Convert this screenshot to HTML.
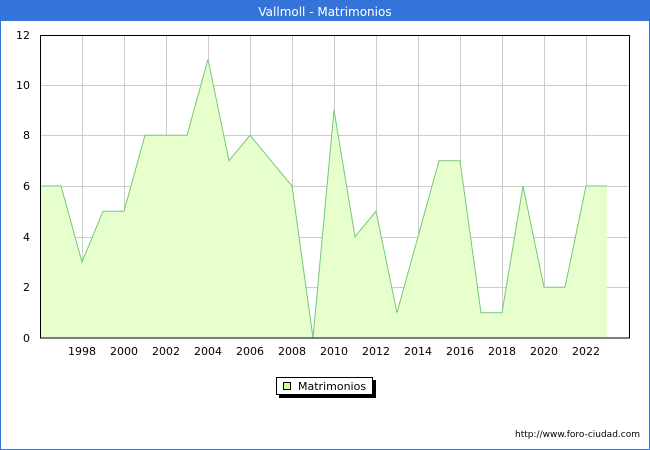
<!DOCTYPE html><html><head><style>body{margin:0}svg{display:block;font-family:"DejaVu Sans","Liberation Sans",sans-serif}</style></head><body>
<svg width="650" height="450" xmlns="http://www.w3.org/2000/svg">
<rect x="0.5" y="0.5" width="649" height="449" fill="#fff" stroke="#3473d9"/>
<rect x="0" y="0" width="650" height="21" fill="#3473d9"/>
<text x="325" y="16" fill="#fff" font-size="12" text-anchor="middle">Vallmoll - Matrimonios</text>
<g stroke="#ccc" stroke-width="1">
<path d="M82.5 35V338M124.5 35V338M166.5 35V338M208.5 35V338M250.5 35V338M292.5 35V338M334.5 35V338M376.5 35V338M418.5 35V338M460.5 35V338M502.5 35V338M544.5 35V338M586.5 35V338"/>
<path d="M40 287.5H630M40 237.5H630M40 186.5H630M40 135.5H630M40 85.5H630"/>
</g>
<path d="M40 186L61 186L82 262L103 211.3L124 211.3L145 135.3L166 135.3L187 135.3L208 59.3L229 160.7L250 135.3L271 160.7L292 186L313 338L334 110L355 236.7L376 211.3L397 312.7L418 236.7L439 160.7L460 160.7L481 312.7L502 312.7L523 186L544 287.3L565 287.3L586 186L607 186L607 338L40 338Z" fill="#e6ffcc" stroke="none"/>
<path d="M40 186L61 186L82 262L103 211.3L124 211.3L145 135.3L166 135.3L187 135.3L208 59.3L229 160.7L250 135.3L271 160.7L292 186L313 338L334 110L355 236.7L376 211.3L397 312.7L418 236.7L439 160.7L460 160.7L481 312.7L502 312.7L523 186L544 287.3L565 287.3L586 186L607 186" fill="none" stroke="#77c777" stroke-width="1"/>
<rect x="40.5" y="35.5" width="589" height="302.5" fill="none" stroke="#000"/>
<g font-size="11" fill="#000" text-anchor="end">
<text x="30" y="342">0</text><text x="30" y="291">2</text><text x="30" y="241">4</text><text x="30" y="190">6</text><text x="30" y="139">8</text><text x="30" y="89">10</text><text x="30" y="39">12</text>
</g>
<g font-size="11" fill="#000" text-anchor="middle">
<text x="82" y="355">1998</text><text x="124" y="355">2000</text><text x="166" y="355">2002</text><text x="208" y="355">2004</text><text x="250" y="355">2006</text><text x="292" y="355">2008</text><text x="334" y="355">2010</text><text x="376" y="355">2012</text><text x="418" y="355">2014</text><text x="460" y="355">2016</text><text x="502" y="355">2018</text><text x="544" y="355">2020</text><text x="586" y="355">2022</text>
</g>
<rect x="279" y="380" width="97" height="18" fill="#000"/>
<rect x="276.5" y="377.5" width="96" height="17" fill="#fff" stroke="#000"/>
<rect x="283.5" y="382.5" width="7" height="7" fill="#ccff99" stroke="#000"/>
<text x="298" y="390" font-size="11">Matrimonios</text>
<text x="640" y="437" font-size="9" text-anchor="end">http://www.foro-ciudad.com</text>
</svg>
</body></html>
